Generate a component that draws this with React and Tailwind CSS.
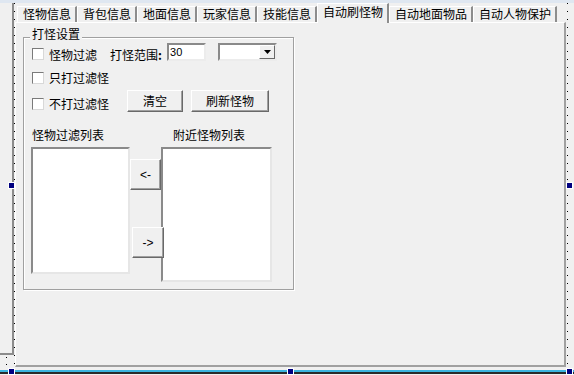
import React from 'react'

const tabs = [
  { label: '怪物信息' },
  { label: '背包信息' },
  { label: '地面信息' },
  { label: '玩家信息' },
  { label: '技能信息' },
  { label: '自动刷怪物', active: true },
  { label: '自动地面物品' },
  { label: '自动人物保护' },
]

function Tab({ label, active }) {
  if (active) {
    return (
      <div className="relative z-10 -mb-px h-[20px] bg-[#f0f0f0] pl-[5px] pr-[4px] pt-[2px] border-l border-t border-white border-r-2 border-r-[#8d8d8d] leading-[12px] whitespace-nowrap">
        {label}
      </div>
    )
  }
  return (
    <div className="h-[16px] pl-[5px] pr-[4px] pt-[1px] border-l border-t border-white border-r-2 border-r-[#8d8d8d] leading-[12px] whitespace-nowrap">
      {label}
    </div>
  )
}

function CheckBox() {
  return <div className="w-[12px] h-[12px] shrink-0 bg-white border border-t-[#7a7a7a] border-l-[#7a7a7a] border-r-[#d8d8d8] border-b-[#d8d8d8]" />
}

function Button({ children, className }) {
  return (
    <button className={'block bg-[#f0f0f0] border border-white border-r-[#696969] border-b-[#696969] shadow-[inset_-1px_-1px_0_#a0a0a0] leading-[12px] text-black ' + className}>
      {children}
    </button>
  )
}

function Dots({ className }) {
  return <div className={'absolute w-px bg-[image:repeating-linear-gradient(to_bottom,#000_0px,#000_1px,transparent_1px,transparent_8px)] ' + className} />
}

function Handle({ className }) {
  return <div className={'absolute w-[7px] h-[7px] bg-[#000080] border border-white ' + className} />
}

export default function App() {
  return (
    <div className="relative w-[574px] h-[375px] overflow-hidden bg-[#f0f0f0] text-black text-[12px] font-['Noto_Sans_CJK_SC',sans-serif]">
      {/* tab control */}
      <div className="ml-[15px] w-[551px]">
        <div className="flex items-end h-[22px] pl-[2px]">
          {tabs.map((t) => (
            <Tab key={t.label} label={t.label} active={t.active} />
          ))}
        </div>
        <div className="h-[345px] border-t border-l border-white border-r-2 border-b-2 border-r-[#a0a0a0] border-b-[#a0a0a0]">
          {/* 打怪设置 group */}
          <div className="relative ml-[7px] mt-[14px] w-[271px] h-[253px] border border-[#a0a0a0] shadow-[inset_1px_1px_0_#fff,1px_1px_0_#fff]">
            <div className="absolute left-[6px] top-[-10px] px-[2px] bg-[#f0f0f0] leading-[12px]">打怪设置</div>

            <div className="flex items-start h-[19px] mt-[5px] pl-[8px]">
              <div className="mt-[5px]"><CheckBox /></div>
              <div className="ml-[5px] mt-[6px] leading-[12px]">怪物过滤</div>
              <div className="ml-[13px] mt-[6px] w-[57px] leading-[12px] whitespace-nowrap">打怪范围<span className="font-bold">:</span></div>
              <div className="w-[39px] h-[18px] bg-white border-2 border-t-[#8a8a8a] border-l-[#8a8a8a] border-r-[#ececec] border-b-[#ececec] pl-[1px] text-[11px] leading-[14px] font-['Liberation_Sans',sans-serif]">30</div>
              <div className="ml-[12px] w-[59px] h-[18px] bg-white border-2 border-t-[#8a8a8a] border-l-[#8a8a8a] border-r-[#ececec] border-b-[#ececec] flex justify-end">
                <div className="w-[16px] h-full bg-[#f0f0f0] border border-white border-r-[#696969] border-b-[#696969] flex items-center justify-center">
                  <svg width="7" height="4" viewBox="0 0 7 4"><polygon points="0,0 7,0 3.5,4" fill="#000" /></svg>
                </div>
              </div>
            </div>

            <div className="flex items-center h-[12px] mt-[10px] pl-[8px]">
              <CheckBox />
              <div className="ml-[5px] leading-[12px]">只打过滤怪</div>
            </div>

            <div className="flex items-start h-[22px] mt-[6px] pl-[8px]">
              <div className="mt-[8px]"><CheckBox /></div>
              <div className="ml-[5px] mt-[8px] leading-[12px]">不打过滤怪</div>
              <Button className="ml-[18px] w-[56px] h-[22px]">清空</Button>
              <Button className="ml-[8px] w-[78px] h-[22px]">刷新怪物</Button>
            </div>

            <div className="flex h-[12px] mt-[17px] pl-[8px] leading-[12px]">
              <div>怪物过滤列表</div>
              <div className="ml-[69px]">附近怪物列表</div>
            </div>

            <div className="flex items-start mt-[6px] pl-[7px]">
              <div className="w-[99px] h-[127px] bg-white border-2 border-t-[#8a8a8a] border-l-[#8a8a8a] border-r-[#e6e6e6] border-b-[#e6e6e6]" />
              <div className="w-[31px] shrink-0">
                <Button className="mt-[12px] w-[31px] h-[31px] font-['Liberation_Sans',sans-serif]">&lt;-</Button>
                <Button className="relative z-10 mt-[37px] ml-[2px] w-[32px] h-[31px] font-['Liberation_Sans',sans-serif]">-&gt;</Button>
              </div>
              <div className="w-[111px] h-[135px] bg-white border-2 border-t-[#8a8a8a] border-l-[#8a8a8a] border-r-[#e6e6e6] border-b-[#e6e6e6]" />
            </div>
          </div>
        </div>
      </div>

      {/* designer chrome overlays */}
      <div className="absolute left-0 top-0 w-full h-[3px] bg-[#dfe7f1]" />
      <div className="absolute left-[12px] top-[3px] w-[2px] h-[352px] bg-[#8c8c8c]" />
      <div className="absolute left-0 top-[353px] w-[14px] h-[2px] bg-[#8c8c8c]" />
      <Dots className="left-[14px] top-[3px] h-[366px]" />
      <Dots className="left-[567px] top-[3px] h-[366px]" />
      <div className="absolute left-[6px] top-[357px] w-px h-px bg-black" />
      <div className="absolute left-[6px] top-[364px] w-px h-px bg-black" />
      <div className="absolute left-0 top-[370px] w-full h-[2px] bg-[#3bb4df]" />
      <div className="absolute left-0 top-[372px] w-full h-[2px] bg-[#2b2b2b]" />
      <Handle className="left-[8px] top-[182px]" />
      <Handle className="left-[566px] top-[182px]" />
      <Handle className="left-[8px] top-[368px]" />
      <Handle className="left-[287px] top-[368px]" />
      <Handle className="left-[566px] top-[368px]" />
    </div>
  )
}
